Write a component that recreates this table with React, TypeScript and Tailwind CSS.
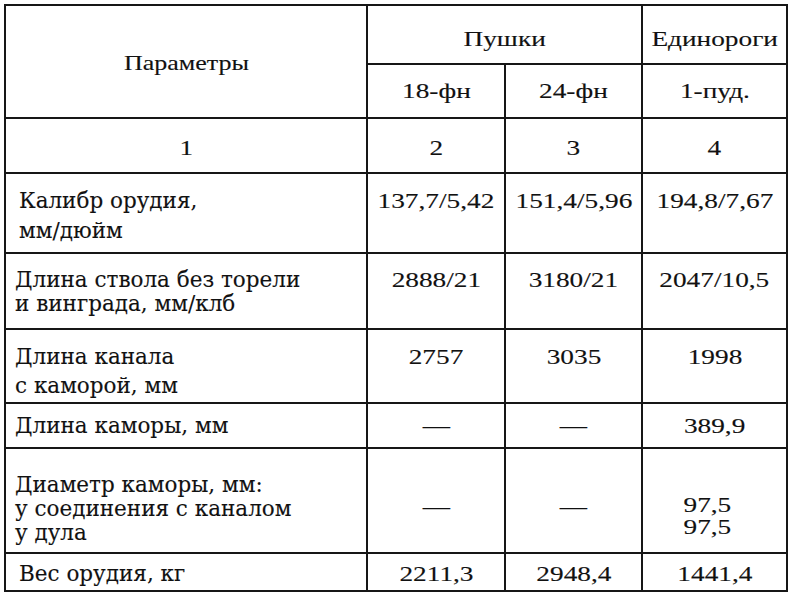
const Txt = ({ children }: { children: React.ReactNode }) => (
  <span className="inline-block scale-x-[1.3] origin-center text-center">{children}</span>
);

const Lbl = ({ children }: { children: React.ReactNode }) => (
  <span className="inline-block origin-left text-left font-['DejaVu_Serif',serif] text-[21.5px]">
    {children}
  </span>
);

const td =
  "border-2 border-[#161616] p-0 font-['Liberation_Serif','Times_New_Roman',serif] text-[#111] [-webkit-text-stroke:0.12px_#111]";

export default function App() {
  return (
    <div className="w-[790px] h-[605px] bg-white pt-[4px] pl-[4px] text-[#111] font-['Liberation_Serif','Times_New_Roman',serif]">
      <table className="table-fixed border-collapse w-[782px] text-[21px] leading-[28px] font-['Liberation_Serif','Times_New_Roman',serif]">
        <colgroup>
          <col className="w-[362px]" />
          <col className="w-[138px]" />
          <col className="w-[137px]" />
          <col className="w-[145px]" />
        </colgroup>
        <tbody>
          <tr className="h-[59px]">
            <td rowSpan={2} className={td + ' text-center align-middle pt-[3px]'}>
              <span className="inline-block scale-x-[1.24]">Параметры</span>
            </td>
            <td colSpan={2} className={td + ' text-center align-middle pt-[8px]'}>
              <Txt>Пушки</Txt>
            </td>
            <td className={td + ' text-center align-middle pt-[8px]'}>
              <Txt>Единороги</Txt>
            </td>
          </tr>
          <tr className="h-[54px]">
            <td className={td + ' text-center align-middle'}>
              <Txt>18-фн</Txt>
            </td>
            <td className={td + ' text-center align-middle'}>
              <Txt>24-фн</Txt>
            </td>
            <td className={td + ' text-center align-middle'}>
              <Txt>1-пуд.</Txt>
            </td>
          </tr>
          <tr className="h-[55px]">
            {['1', '2', '3', '4'].map((n) => (
              <td key={n} className={td + ' text-center align-middle pt-[4px]'}>
                <Txt>{n}</Txt>
              </td>
            ))}
          </tr>
          <tr className="h-[80px]">
            <td className={td + ' align-top pt-[12px] pl-[13px] leading-[30px]'}>
              <Lbl>
                Калибр орудия,
                <br />
                мм/дюйм
              </Lbl>
            </td>
            {['137,7/5,42', '151,4/5,96', '194,8/7,67'].map((v) => (
              <td key={v} className={td + ' text-center align-top pt-[13px]'}>
                <Txt>{v}</Txt>
              </td>
            ))}
          </tr>
          <tr className="h-[76px]">
            <td className={td + ' align-top pt-[14px] pl-[9px] leading-[24px]'}>
              <Lbl>
                Длина ствола без торели
                <br />и винграда, мм/клб
              </Lbl>
            </td>
            {['2888/21', '3180/21', '2047/10,5'].map((v) => (
              <td key={v} className={td + ' text-center align-top pt-[14px] leading-[24px]'}>
                <Txt>{v}</Txt>
              </td>
            ))}
          </tr>
          <tr className="h-[74px]">
            <td className={td + ' align-top pt-[12px] pl-[9px] leading-[29px]'}>
              <Lbl>
                Длина канала
                <br />с каморой, мм
              </Lbl>
            </td>
            {['2757', '3035', '1998'].map((v) => (
              <td key={v} className={td + ' text-center align-top pt-[13px]'}>
                <Txt>{v}</Txt>
              </td>
            ))}
          </tr>
          <tr className="h-[45px]">
            <td className={td + ' align-middle pl-[9px]'}>
              <Lbl>Длина каморы, мм</Lbl>
            </td>
            <td className={td + ' text-center align-middle'}>
              <Txt>—</Txt>
            </td>
            <td className={td + ' text-center align-middle'}>
              <Txt>—</Txt>
            </td>
            <td className={td + ' text-center align-middle'}>
              <Txt>389,9</Txt>
            </td>
          </tr>
          <tr className="h-[105px]">
            <td className={td + ' align-top pt-[24px] pl-[9px] leading-[24px]'}>
              <Lbl>
                Диаметр каморы, мм:
                <br />у соединения с каналом
                <br />у дула
              </Lbl>
            </td>
            <td className={td + ' text-center align-middle pt-[12px]'}>
              <Txt>—</Txt>
            </td>
            <td className={td + ' text-center align-middle pt-[12px]'}>
              <Txt>—</Txt>
            </td>
            <td className={td + ' text-center align-top pt-[45px] pr-[14px] leading-[22px]'}>
              <Txt>
                97,5
                <br />
                97,5
              </Txt>
            </td>
          </tr>
          <tr className="h-[38px]">
            <td className={td + ' align-middle pt-[4px] pl-[13px]'}>
              <Lbl>Вес орудия, кг</Lbl>
            </td>
            {['2211,3', '2948,4', '1441,4'].map((v) => (
              <td key={v} className={td + ' text-center align-middle pt-[3px]'}>
                <Txt>{v}</Txt>
              </td>
            ))}
          </tr>
        </tbody>
      </table>
    </div>
  );
}
